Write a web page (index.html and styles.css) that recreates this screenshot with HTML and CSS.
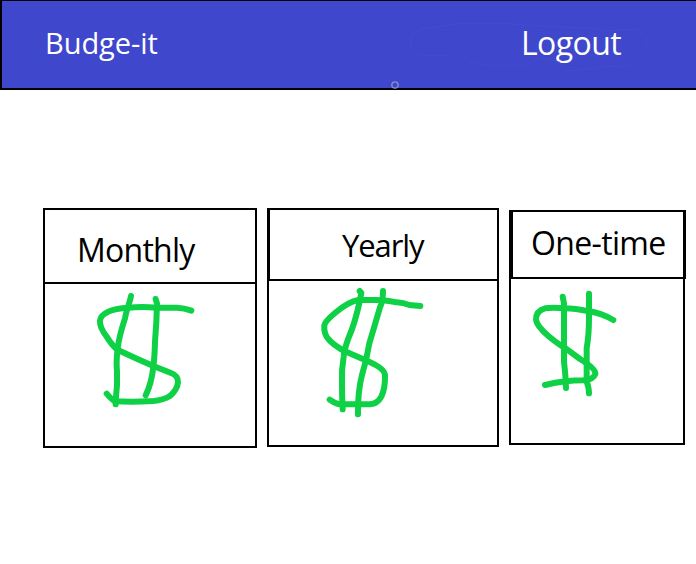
FILE: index.html
```html
<!DOCTYPE html>
<html lang="en">
<head>
<meta charset="utf-8">
<title>Budge-it</title>
<link rel="stylesheet" href="styles.css">
</head>
<body>
<header class="topbar">
  <svg class="trace" viewBox="0 0 948 270" aria-hidden="true">
    <path class="halo" d="M210 167H125Q91 160 91 125Q95 95 125 87L180 79L240 71H375L500 79L650 86L665 91L700 91L765 88Q800 97 800 128Q798 150 780 160L762 184Q750 198 730 199H680L590 211H565Q548 207 540 187L490 173L465 177Q450 197 430 197H320L290 192Q265 185 252 168"/>
    <circle class="dot" cx="45" cy="255" r="9.5"/>
  </svg>
  <span class="brand">Budge-it</span>
  <a class="logout">Logout</a>
</header>
<main class="cards">
  <section class="card monthly">
    <h2 class="head"><span>Monthly</span></h2>
    <svg class="dollar" viewBox="45 284 210 162" role="img" aria-label="Dollar sign">
      <g transform="translate(85 285) scale(.33333)">
        <path d="M319 77Q298 69 275 68L215 68Q170 64 130 68Q90 70 70 80Q45 91 45 108Q44 128 65 155Q80 180 97 194Q150 219 205 243L258 264Q280 272 279 292Q277 314 255 333Q235 345 205 348Q145 352 90 349Q82 346 65 326"/>
        <path d="M138 33C134 55 124 75 120 100Q102 155 98 190Q93 230 96 260V300Q93 330 92 358"/>
        <path d="M212 42L216 56Q215 110 210 170Q209 215 205 245Q200 295 182 331"/>
      </g>
    </svg>
  </section>
  <section class="card yearly">
    <h2 class="head"><span>Yearly</span></h2>
    <svg class="dollar" viewBox="269 281 228 164" role="img" aria-label="Dollar sign">
      <g transform="translate(310 280) scale(.33333)">
        <path d="M331 78L298 75Q280 68 260 67Q220 60 200 60H145Q115 65 75 99Q45 124 43 136Q41 162 55 177Q70 195 103 213L167 241Q223 264 225 285Q226 325 214 350Q203 371 180 373H90Q75 371 59 359"/>
        <path d="M149 33L154 39L150 60Q135 130 117 170Q102 210 101 230Q94 270 96 310Q96 350 98 388"/>
        <path d="M219 33Q219 65 210 82L178 190Q170 240 156 285Q143 335 144 403"/>
      </g>
    </svg>
  </section>
  <section class="card onetime">
    <h2 class="head"><span>One-time</span></h2>
    <svg class="dollar" viewBox="511 279 172 164" role="img" aria-label="Dollar sign">
      <g transform="translate(520 280) scale(.33333)">
        <path d="M280 120Q245 100 207 94Q165 85 132 85Q100 82 75 85Q48 92 48 119Q50 138 85 168Q115 193 137 205L180 237Q228 266 226 282Q220 299 190 301Q160 301 138 304Q105 307 75 315"/>
        <path d="M128 50L132 70V245Q137 285 138 324"/>
        <path d="M207 41V115Q207 165 200 205V305Q206 318 207 340"/>
      </g>
    </svg>
  </section>
</main>
</body>
</html>
```

FILE: styles.css
```css
* { box-sizing: border-box; }

body {
  margin: 0;
  background: #fff;
  color: #000;
  font-family: "Open Sans", "Noto Sans", sans-serif;
  overflow: hidden;
}

.topbar {
  position: relative;
  display: flex;
  justify-content: space-between;
  height: 90px;
  padding: 19px 75px 0 43px;
  background: #3f48cc;
  border: solid #000;
  border-width: 1px 0 2px 2px;
  color: #fff;
  line-height: 46px;
}

.brand {
  font-size: 29px;
  letter-spacing: -0.05px;
}

.logout {
  font-size: 32px;
  letter-spacing: -0.6px;
}

.trace {
  position: absolute;
  left: 378px;
  top: -1px;
  width: 316px;
  height: 90px;
  fill: none;
}

.halo {
  stroke: #444dce;
  stroke-width: 3;
}

.dot {
  stroke: #8b90cc;
  stroke-width: 4;
}

.cards {
  display: grid;
  grid-template-columns: 214px 232px 177px;
  column-gap: 10px;
  align-items: start;
  padding: 118px 0 0 43px;
}

.card {
  display: flex;
  flex-direction: column;
  border: 2px solid #000;
}

.head {
  margin: 0;
  border-bottom: 2px solid #000;
  font-size: 32px;
  font-weight: 400;
  line-height: 44px;
  white-space: nowrap;
}

.dollar {
  display: block;
  fill: none;
  stroke: #0ed145;
  stroke-width: 18;
  stroke-linecap: round;
  stroke-linejoin: round;
}

.monthly { height: 240px; }
.monthly .head { height: 74px; padding: 18px 0 0 32px; letter-spacing: -0.75px; }
.monthly .dollar { width: 210px; height: 162px; }

.yearly { height: 239px; }
.yearly .head {
  height: 71px;
  padding: 13px 0 0 72px;
  border-left: 1px solid #000;
  font-size: 31px;
  letter-spacing: -1.1px;
}
.yearly .dollar { width: 228px; height: 164px; }

.onetime { width: 176px; height: 235px; margin-top: 2px; }
.onetime .head {
  width: 175px;
  height: 69px;
  margin-top: -2px;
  padding: 9px 0 0 18px;
  border: 2px solid #000;
  letter-spacing: -0.65px;
}
.onetime .dollar { width: 172px; height: 164px; }
```
